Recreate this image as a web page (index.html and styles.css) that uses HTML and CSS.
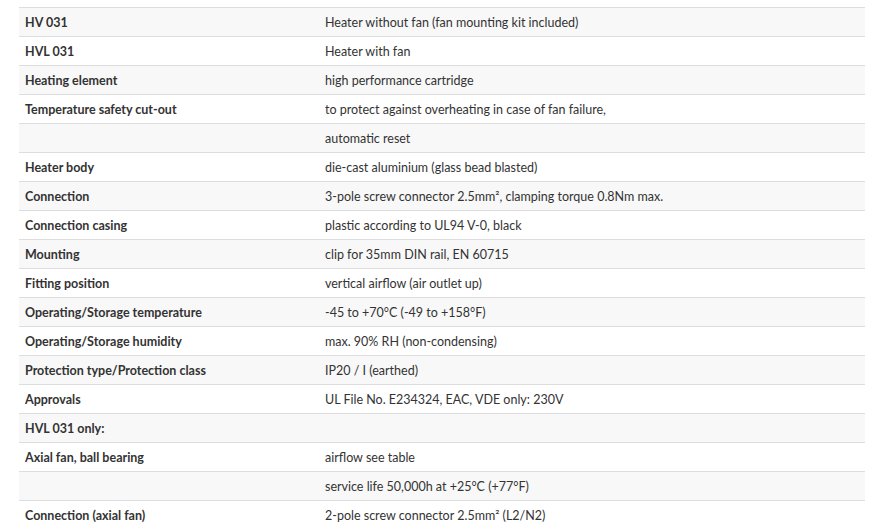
FILE: index.html
```html
<!DOCTYPE html>
<html lang="en">
<head>
<meta charset="utf-8">
<title>Technical data</title>
<link rel="stylesheet" href="styles.css">
</head>
<body>
<div class="wrap">
<table class="spec">
<tbody>
<tr><th>HV 031</th><td>Heater without fan (fan mounting kit included)</td></tr>
<tr><th>HVL 031</th><td>Heater with fan</td></tr>
<tr><th>Heating element</th><td>high performance cartridge</td></tr>
<tr><th>Temperature safety cut-out</th><td>to protect against overheating in case of fan failure,</td></tr>
<tr><th></th><td>automatic reset</td></tr>
<tr><th>Heater body</th><td>die-cast aluminium (glass bead blasted)</td></tr>
<tr><th>Connection</th><td>3-pole screw connector 2.5mm², clamping torque 0.8Nm max.</td></tr>
<tr><th>Connection casing</th><td>plastic according to UL94 V-0, black</td></tr>
<tr><th>Mounting</th><td>clip for 35mm DIN rail, EN 60715</td></tr>
<tr><th>Fitting position</th><td>vertical airflow (air outlet up)</td></tr>
<tr><th>Operating/Storage temperature</th><td>-45 to +70°C (-49 to +158°F)</td></tr>
<tr><th>Operating/Storage humidity</th><td>max. 90% RH (non-condensing)</td></tr>
<tr><th>Protection type/Protection class</th><td>IP20 / I (earthed)</td></tr>
<tr><th>Approvals</th><td>UL File No. E234324, EAC, VDE only: 230V</td></tr>
<tr><th>HVL 031 only:</th><td></td></tr>
<tr><th>Axial fan, ball bearing</th><td>airflow see table</td></tr>
<tr><th></th><td>service life 50,000h at +25°C (+77°F)</td></tr>
<tr><th>Connection (axial fan)</th><td>2-pole screw connector 2.5mm² (L2/N2)</td></tr>
</tbody>
</table>
</div>
</body>
</html>
```
FILE: styles.css
```css
html, body {
  margin: 0;
  padding: 0;
  background: #ffffff;
}
.wrap {
  padding: 7px 10px 0 19px;
}
.spec {
  width: 846px;
  border-collapse: collapse;
  font-family: Lato, "Liberation Sans", sans-serif;
  font-size: 12.5px;
  color: #333333;
}
.spec th,
.spec td {
  height: 28px;
  padding: 0 6px;
  border-top: 1px solid #dddddd;
  text-align: left;
  vertical-align: middle;
  white-space: nowrap;
}
.spec th {
  width: 288px;
  font-weight: 700;
}
.spec td {
  font-weight: 400;
}
.spec tr:nth-child(odd) {
  background: #f8f8f8;
}
```
